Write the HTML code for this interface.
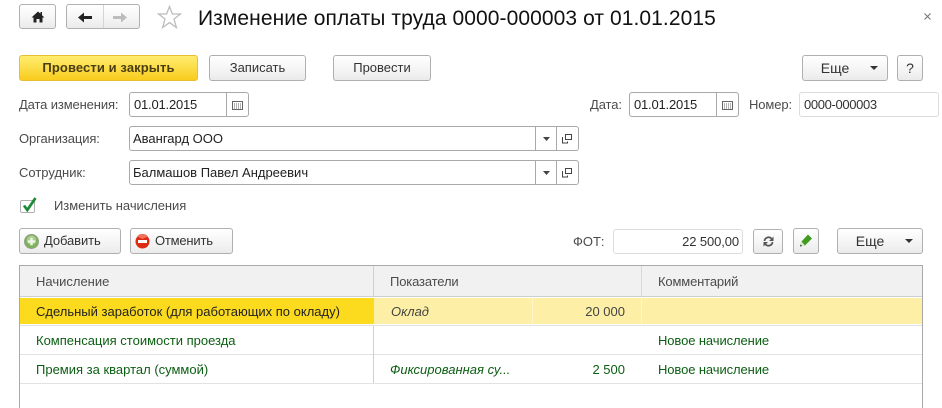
<!DOCTYPE html>
<html><head><meta charset="utf-8">
<style>
html,body{margin:0;padding:0;background:#fff}
#p{position:relative;width:942px;height:408px;overflow:hidden;background:#fff;font-family:"Liberation Sans",sans-serif;font-size:13px;color:#4b4b4b}
#p div,#p svg{position:absolute;box-sizing:border-box}
.b{border:1px solid #b0b0b0;border-radius:3px;background:linear-gradient(#fff,#f7f7f7 45%,#ebebeb);color:#333;text-align:center;height:26px;line-height:24px;white-space:nowrap}
.f{border:1px solid #a9a9a9;border-radius:3px;background:#fff;height:25px;line-height:23px;color:#222;padding-left:3px;white-space:nowrap}
.l{white-space:nowrap;line-height:16px;height:16px}
.v{width:1px;background:#a9a9a9}
.t{white-space:nowrap;line-height:16px;height:16px}
.g{color:#0b5e12}
</style></head><body><div id="p">

<div class="b" style="left:19px;top:4px;width:37px;height:25px"></div>
<svg style="left:31px;top:11px" width="14" height="12" viewBox="0 0 14 12"><path d="M7 0.500L0.500 6.500H2.500V11.500H5.500V8H8.500V11.500H11.500V6.500H13.500L11 4.200V1H9.500V2.800Z" fill="#222"/></svg>
<div class="b" style="left:66px;top:4px;width:74px;height:25px"></div>
<div style="left:103px;top:5px;width:1px;height:23px;background:#d4d4d4"></div>
<svg style="left:78px;top:12px" width="14" height="11" viewBox="0 0 14 11"><path d="M0 5.500L6 .5V4H14V7H6V10.500Z" fill="#222"/></svg>
<svg style="left:113px;top:12px" width="14" height="11" viewBox="0 0 14 11"><path d="M14 5.500L8 .5V4H0V7H8V10.500Z" fill="#bcbcbc"/></svg>
<svg style="left:157px;top:5px" width="25" height="24" viewBox="0 0 25 24"><path d="M12.500 1.500L15.400 9H23.500L17 14L19.400 22.500L12.500 17.600L5.600 22.500L8 14L1.500 9H9.600Z" fill="#fff" stroke="#bcbcbc" stroke-width="1.300"/></svg>
<div class="t" style="left:198px;top:6px;height:26px;line-height:26px;font-size:21px;letter-spacing:.08px;color:#111">Изменение оплаты труда 0000-000003 от 01.01.2015</div>
<svg style="left:924px;top:13px" width="7" height="7" viewBox="0 0 7 7"><path d="M.5 .5L6.500 6.500M6.500 .5L.5 6.500" stroke="#777" stroke-width="1.100"/></svg>

<div class="b" style="left:19px;top:55px;width:179px;border-color:#eabf38;background:linear-gradient(#ffec6e,#fcdf4c 45%,#f9cb1c);font-weight:bold;font-size:13px;color:#4a3d12;letter-spacing:.1px">Провести и закрыть</div>
<div class="b" style="left:209px;top:55px;width:97px">Записать</div>
<div class="b" style="left:333px;top:55px;width:98px">Провести</div>
<div class="b" style="left:802px;top:55px;width:86px;padding-right:20px;font-size:14px">Еще</div>
<svg style="left:870px;top:66px" width="8" height="4" viewBox="0 0 8 4"><path d="M0 0H8L4 4Z" fill="#333"/></svg>
<div class="b" style="left:897px;top:55px;width:26px;font-size:14px">?</div>

<div class="l" style="left:19px;top:97px;letter-spacing:-.13px">Дата изменения:</div>
<div class="f" style="left:129px;top:92px;width:120px;padding-left:4px;letter-spacing:-.2px">01.01.2015</div>
<div class="v" style="left:226px;top:93px;height:23px"></div>
<svg style="left:232px;top:101px" width="11" height="9" viewBox="0 0 11 9"><rect x=".5" y=".5" width="10" height="8" fill="#fff" stroke="#666"/><path d="M2 3h1M4 3h1M6 3h1M8 3h1M2 5h1M4 5h1M6 5h1M8 5h1M2 7h1M4 7h1M6 7h1M8 7h1" stroke="#666" stroke-width="1"/></svg>
<div class="l" style="left:590px;top:97px;letter-spacing:-.1px">Дата:</div>
<div class="f" style="left:629px;top:92px;width:110px;padding-left:4px;letter-spacing:-.2px">01.01.2015</div>
<div class="v" style="left:716px;top:93px;height:23px"></div>
<svg style="left:722px;top:101px" width="11" height="9" viewBox="0 0 11 9"><rect x=".5" y=".5" width="10" height="8" fill="#fff" stroke="#666"/><path d="M2 3h1M4 3h1M6 3h1M8 3h1M2 5h1M4 5h1M6 5h1M8 5h1M2 7h1M4 7h1M6 7h1M8 7h1" stroke="#666" stroke-width="1"/></svg>
<div class="l" style="left:749px;top:97px;letter-spacing:-.1px">Номер:</div>
<div class="f" style="left:799px;top:92px;width:140px;border-color:#dcdcdc;color:#333;padding-left:4px;letter-spacing:-.35px">0000-000003</div>

<div class="l" style="left:19px;top:131px;letter-spacing:-.1px">Организация:</div>
<div class="f" style="left:129px;top:126px;width:450px">Авангард ООО</div>
<div class="v" style="left:535px;top:127px;height:23px"></div>
<div class="v" style="left:556px;top:127px;height:23px"></div>
<svg style="left:543px;top:137px" width="7" height="4" viewBox="0 0 7 4"><path d="M0 0H7L3.500 4Z" fill="#444"/></svg>
<svg style="left:562px;top:134px" width="11" height="10" viewBox="0 0 11 10"><path d="M3.500 .5H9.500V5.500H3.500ZM1 3.500H.5V9H5.500V7.500" fill="none" stroke="#444"/></svg>

<div class="l" style="left:19px;top:165px">Сотрудник:</div>
<div class="f" style="left:129px;top:160px;width:450px">Балмашов Павел Андреевич</div>
<div class="v" style="left:535px;top:161px;height:23px"></div>
<div class="v" style="left:556px;top:161px;height:23px"></div>
<svg style="left:543px;top:171px" width="7" height="4" viewBox="0 0 7 4"><path d="M0 0H7L3.500 4Z" fill="#444"/></svg>
<svg style="left:562px;top:168px" width="11" height="10" viewBox="0 0 11 10"><path d="M3.500 .5H9.500V5.500H3.500ZM1 3.500H.5V9H5.500V7.500" fill="none" stroke="#444"/></svg>

<div style="left:20px;top:200px;width:15px;height:13px;border:1px solid #b0b0b0;border-radius:2px;background:#fff"></div>
<svg style="left:21px;top:196px" width="16" height="16" viewBox="0 0 16 16"><path d="M3 9.500L6.300 14L14.500 2" fill="none" stroke="#1c8a35" stroke-width="2.700"/></svg>
<div class="l" style="left:54px;top:198px;letter-spacing:-.05px">Изменить начисления</div>

<div class="b" style="left:19px;top:228px;width:102px;text-align:left;padding-left:24px;letter-spacing:-.1px">Добавить</div>
<svg style="left:24px;top:234px" width="15" height="15" viewBox="0 0 16 16"><circle cx="8" cy="8" r="7.500" fill="#7fb35a" stroke="#8f9f85"/><circle cx="8" cy="6.500" r="5" fill="#a9cc8d"/><path d="M8 4V12M4 8H12" stroke="#f2f7ec" stroke-width="2.500"/></svg>
<div class="b" style="left:130px;top:228px;width:103px;text-align:left;padding-left:24px;letter-spacing:-.2px">Отменить</div>
<svg style="left:135px;top:234px" width="15" height="15" viewBox="0 0 15 15"><circle cx="7.500" cy="7.500" r="7" fill="#dd2a12"/><path d="M2 2.500A7 7 0 0 1 13 2.500L7.500 5Z" fill="#f0705a"/><rect x="3" y="6" width="9" height="3" fill="#fff"/></svg>

<div class="l" style="left:573px;top:234px">ФОТ:</div>
<div class="f" style="left:613px;top:229px;width:130px;border-color:#dcdcdc;text-align:right;padding:0 3px 0 0;letter-spacing:-.1px;color:#333">22 500,00</div>
<div class="b" style="left:753px;top:229px;width:30px;height:25px"></div>
<svg style="left:763px;top:236px" width="11" height="11" viewBox="0 0 11 11"><path d="M1.500 5A4 4 0 0 1 8.500 2.700M9.500 6A4 4 0 0 1 2.500 8.300" fill="none" stroke="#555" stroke-width="1.700"/><path d="M10.500 .5V5H6ZM.5 10.500V6H5Z" fill="#555"/></svg>
<div class="b" style="left:793px;top:228px;width:26px"></div>
<svg style="left:799px;top:233px" width="14" height="15" viewBox="0 0 14 15"><path d="M1 13.500L2.500 8.500L9 1.500L13 5.500L6 12.500Z" fill="#3f9c1e"/><path d="M1 13.500L2.500 8.500L6 12.500Z" fill="#d9ecc9"/><path d="M1 13.500L1.600 11.500L3 13Z" fill="#222"/></svg>
<div class="b" style="left:837px;top:228px;width:86px;padding-right:20px;font-size:14px">Еще</div>
<svg style="left:905px;top:239px" width="8" height="4" viewBox="0 0 8 4"><path d="M0 0H8L4 4Z" fill="#333"/></svg>

<div style="left:19px;top:265px;width:904px;height:143px;border:1px solid #a9a9a9;border-bottom:0"></div>
<div style="left:20px;top:266px;width:902px;height:30px;background:#f1f1f1"></div>
<div style="left:20px;top:296px;width:902px;height:1px;background:#cfcfcf"></div>
<div style="left:20px;top:298px;width:354px;height:26px;background:#fcdb1e"></div>
<div style="left:374px;top:298px;width:548px;height:26px;background:#fdf0a6"></div>
<div style="left:532px;top:298px;width:1px;height:26px;background:#fff6cc"></div>
<div style="left:641px;top:298px;width:1px;height:26px;background:#fff6cc"></div>
<div style="left:20px;top:325px;width:902px;height:1px;background:#e2e2e2"></div>
<div style="left:20px;top:354px;width:902px;height:1px;background:#e2e2e2"></div>
<div style="left:20px;top:383px;width:902px;height:1px;background:#e2e2e2"></div>
<div style="left:373px;top:266px;width:1px;height:30px;background:#d0d0d0"></div>
<div style="left:373px;top:326px;width:1px;height:57px;background:#d0d0d0"></div>
<div style="left:641px;top:266px;width:1px;height:30px;background:#d8d8d8"></div>

<div class="t" style="left:36px;top:274px">Начисление</div>
<div class="t" style="left:390px;top:274px;letter-spacing:-.15px">Показатели</div>
<div class="t" style="left:658px;top:274px;letter-spacing:-.15px">Комментарий</div>

<div class="t" style="left:36px;top:304px;color:#222">Сдельный заработок (для работающих по окладу)</div>
<div class="t" style="left:391px;top:304px;font-style:italic;color:#444">Оклад</div>
<div class="t" style="left:560px;width:65px;text-align:right;top:304px;color:#444">20 000</div>

<div class="t g" style="left:36px;top:333px">Компенсация стоимости проезда</div>
<div class="t g" style="left:658px;top:333px;letter-spacing:-.1px">Новое начисление</div>

<div class="t g" style="left:36px;top:362px">Премия за квартал (суммой)</div>
<div class="t g" style="left:390px;top:362px;font-style:italic">Фиксированная су...</div>
<div class="t g" style="left:560px;width:65px;text-align:right;top:362px">2 500</div>
<div class="t g" style="left:658px;top:362px;letter-spacing:-.1px">Новое начисление</div>

</div></body></html>
